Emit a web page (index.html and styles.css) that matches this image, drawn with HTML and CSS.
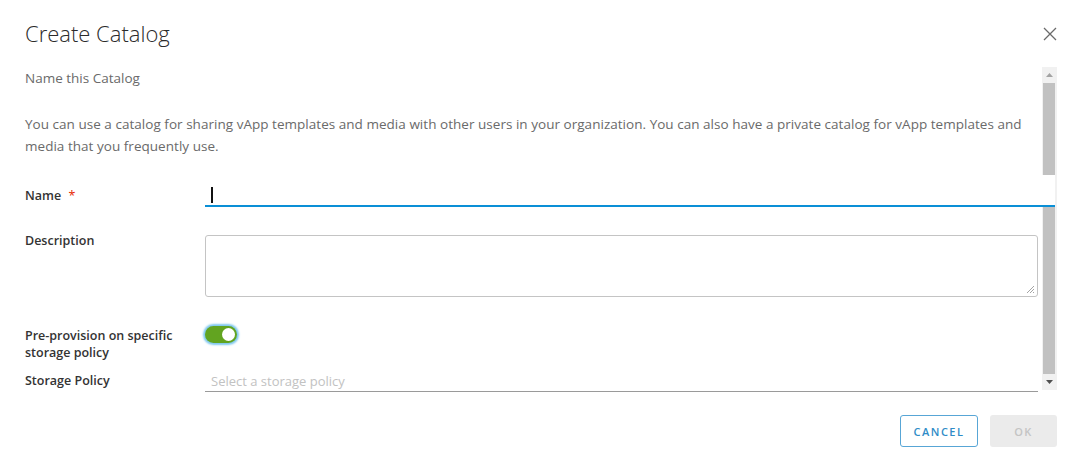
FILE: index.html
```html
<!DOCTYPE html>
<html>
<head>
<meta charset="utf-8">
<link rel="stylesheet" href="styles.css">
</head>
<body>
<div class="modal">
  <div class="modal-header">
    <h1 class="modal-title">Create Catalog</h1>
    <button class="close-btn" aria-label="Close">
      <svg width="14" height="14" viewBox="0 0 14 14"><path d="M1 1 L13 13 M13 1 L1 13" stroke="#6a6a6a" stroke-width="1.3" fill="none"/></svg>
    </button>
  </div>
  <div class="modal-body">
    <div class="content">
      <p class="subtitle">Name this Catalog</p>
      <p class="intro">You can use a catalog for sharing vApp templates and media with other users in your organization. You can also have a private catalog for vApp templates and media that you frequently use.</p>
      <div class="form-row row-name">
        <label class="form-label label-name">Name <span class="req">*</span></label>
        <div class="name-input"><span class="caret"></span></div>
      </div>
      <div class="form-row row-desc">
        <label class="form-label label-desc">Description</label>
        <div class="textarea"><svg class="grip" width="9" height="9" viewBox="0 0 9 9"><path d="M8 1 L1 8 M8 4 L4 8 M8 7 L7 8" stroke="#9a9a9a" stroke-width="0.9"/></svg></div>
      </div>
      <div class="form-row row-toggle">
        <label class="form-label label-toggle">Pre-provision on specific storage policy</label>
        <div class="toggle"><span class="knob"></span></div>
      </div>
      <div class="form-row row-policy">
        <label class="form-label label-policy">Storage Policy</label>
        <div class="select">Select a storage policy</div>
      </div>
    </div>
    <div class="scrollbar">
      <div class="sb-btn"><svg width="7" height="4" viewBox="0 0 7 4"><path d="M3.5 0 L7 4 L0 4 Z" fill="#a3a3a3"/></svg></div>
      <div class="sb-thumb"></div>
      <div class="sb-btn"><svg width="7" height="4" viewBox="0 0 7 4"><path d="M0 0 L7 0 L3.5 4 Z" fill="#505050"/></svg></div>
    </div>
  </div>
  <div class="modal-footer">
    <button class="btn btn-outline">CANCEL</button>
    <button class="btn btn-disabled">OK</button>
  </div>
</div>
</body>
</html>
```
FILE: styles.css
```css
* { box-sizing: border-box; }
html, body { margin: 0; padding: 0; background: #fff; }
body {
  width: 1079px;
  height: 470px;
  font-family: "Open Sans", Lato, sans-serif;
  color: #565656;
  overflow: hidden;
}
.modal { display: flex; flex-direction: column; height: 470px; }
.modal-header {
  height: 67px;
  display: flex;
  align-items: center;
  justify-content: space-between;
  padding: 0 22px 0 25px;
}
.modal-title {
  margin: 0;
  font-size: 22px;
  font-weight: 300;
  color: #2b2b2b;
  line-height: 24px;
  padding-bottom: 2px;
}
.close-btn {
  border: 0; background: none; padding: 0; margin: 0;
  width: 14px; height: 14px; display: flex;
}
.modal-body {
  display: flex;
  height: 323px;
  margin: 0 22px 0 25px;
}
.content { flex: 1; min-width: 0; padding-right: 4px; }
.subtitle {
  margin: 0;
  font-size: 13.5px;
  line-height: 22px;
  color: #6a6a6a;
}
.intro {
  margin: 24px 0 0;
  font-size: 13.5px;
  letter-spacing: 0.03px;
  line-height: 22px;
  color: #6a6a6a;
}
.form-row { display: flex; align-items: flex-start; }
.form-label {
  width: 180px;
  flex: none;
  font-size: 12.5px;
  font-weight: 600;
  color: #333;
  line-height: 17px;
}
.req { color: #e62700; margin-left: 4px; font-weight: 400; }
.row-name { margin-top: 18px; height: 32px; }
.label-name { padding-top: 12px; }
.name-input {
  flex: 1;
  height: 32px;
  margin-right: -17px;
  background: #fff;
  border-bottom: 2px solid #0a8fd6;
  position: relative;
  z-index: 1;
  padding: 12px 0 0 6px;
}
.caret { display: block; width: 1.5px; height: 16px; background: #111; }
.row-desc { margin-top: 23px; }
.label-desc { padding-top: 2px; }
.textarea {
  flex: 1;
  height: 62px;
  margin-top: 5px;
  border: 1px solid #c4c4c4;
  border-radius: 3px;
  position: relative;
  display: flex;
  align-items: flex-end;
  justify-content: flex-end;
  padding: 0 2px 2px 0;
}
.grip { display: block; }
.row-toggle { margin-top: 29px; }
.label-toggle { padding-top: 1px; }
.toggle {
  width: 32px;
  height: 17px;
  border-radius: 9px;
  background: #62a420;
  box-shadow: 0 0 2px 2px #7fc8ee;
  display: flex;
  align-items: center;
  justify-content: flex-end;
  padding-right: 2px;
}
.knob {
  width: 13px; height: 13px; border-radius: 50%;
  background: #fff;
}
.row-policy { margin-top: 10px; }
.label-policy { padding-top: 1px; }
.select {
  flex: 1;
  height: 21px;
  border-bottom: 1px solid #9a9a9a;
  font-size: 13px;
  line-height: 20px;
  color: #c2c2c2;
  padding-left: 6px;
}
.scrollbar {
  width: 15px;
  flex: none;
  background: #f1f1f1;
  display: flex;
  flex-direction: column;
  align-items: center;
}
.sb-btn {
  height: 16px;
  width: 15px;
  display: flex;
  align-items: center;
  justify-content: center;
}
.sb-thumb {
  flex: 1;
  width: 12px;
  background: #c1c1c1;
  margin-right: 1px;
}
.modal-footer {
  display: flex;
  justify-content: flex-end;
  gap: 12px;
  padding: 25px 22px 0 0;
}
.btn {
  height: 32px;
  border-radius: 3px;
  font-family: "Open Sans", sans-serif;
  font-size: 11px;
  font-weight: 600;
  letter-spacing: 1.5px;
  padding: 0;
}
.btn-outline {
  width: 78px;
  background: #fff;
  border: 1px solid #58a6d6;
  color: #2f8cc7;
}
.btn-disabled {
  width: 67px;
  background: #ebebeb;
  border: 0;
  color: #c4c4c4;
}
```
